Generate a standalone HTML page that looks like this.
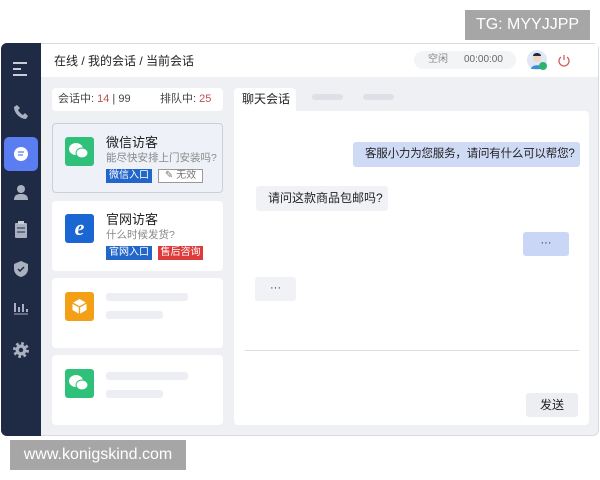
<!DOCTYPE html>
<html><head><meta charset="utf-8"><style>
*{box-sizing:border-box;margin:0;padding:0}
body{width:600px;height:480px;background:#fff;position:relative;overflow:hidden;font-family:"Liberation Sans","Noto Sans CJK SC",sans-serif;color:#333}
.abs{position:absolute;white-space:nowrap}
.frame{left:1px;top:43px;width:598px;height:393px;background:#eff0f4;border:1px solid #d8dbe2;border-radius:6px;overflow:hidden}
.side{left:1px;top:43px;width:40px;height:393px;background:#1f2a44;border-radius:6px 0 0 6px}
.hdr{left:41px;top:44px;width:557px;height:33px;background:#fff}
.card{background:#fff;border-radius:4px}
.ico{width:29px;height:29px;border-radius:3px}
.tag{font-size:10px;color:#fff;height:14px;display:flex;align-items:center;justify-content:center;line-height:1}
.bar{background:#eceef3;border-radius:3px;height:8px}
.g{fill:#a9b0c0}
</style></head><body>
<div class="abs" style="left:465px;top:10px;width:125px;height:30px;background:#a6a6a6;color:#fff;font-size:16px;line-height:30px;text-align:center">TG: MYYJJPP</div>

<div class="abs frame"></div>
<div class="abs side"></div>
<svg class="abs" style="left:1px;top:43px" width="40" height="330" viewBox="0 0 40 330">
<g stroke="#c8cdd8" stroke-width="2" fill="none"><path d="M12 20h14M12 26h8M12 32h14"/></g>
<path class="g" d="M13 64c0 6 6 12 12 12l2-3-3-3-2 2c-2-1-4-3-5-5l2-2-3-3z"/>
<rect x="3" y="94" width="34" height="34" rx="5" fill="#5b7df2"/>
<circle cx="20" cy="111" r="7" fill="#fff"/><path d="M17 109h6M17 112h5" stroke="#5b7df2" stroke-width="1.2"/>
<circle cx="20" cy="146" r="4" class="g"/><path class="g" d="M13 157c0-5 3-6 7-6s7 1 7 6z"/>
<rect x="14" y="180" width="12" height="15" rx="1" class="g"/><rect x="17" y="178" width="6" height="3" fill="#c8cdd8"/><path d="M16 185h8M16 189h8" stroke="#1f2a44"/>
<path class="g" d="M20 218l7 3v5c0 4-3 7-7 8-4-1-7-4-7-8v-5z"/><path d="M17 226l2 2 4-4" stroke="#1f2a44" stroke-width="1.5" fill="none"/>
<path d="M14 260v9M18 264v5M22 261v8M26 266v3" stroke="#a9b0c0" stroke-width="2"/><path d="M13 271h14" stroke="#a9b0c0"/>
<circle cx="20" cy="307" r="6.5" fill="none" stroke="#a9b0c0" stroke-width="3" stroke-dasharray="2.6 2.5"/><circle cx="20" cy="307" r="5.5" class="g"/><circle cx="20" cy="307" r="2.2" fill="#1f2a44"/>
</svg>

<div class="abs hdr"></div>
<div class="abs" style="left:54px;top:52px;font-size:12px;color:#222">在线 / 我的会话 / 当前会话</div>
<div class="abs" style="left:414px;top:51px;width:102px;height:18px;background:#f3f4f6;border-radius:9px;font-size:10px;line-height:18px;color:#888"><span style="margin-left:14px">空闲</span><span style="margin-left:16px;color:#666">00:00:00</span></div>
<svg class="abs" style="left:526px;top:49px" width="24" height="24"><circle cx="11" cy="11" r="10" fill="#dfe8f4"/><circle cx="11" cy="9" r="4" fill="#f2d6c0"/><path d="M7 7c0-4 8-4 8 0z" fill="#1f2a44"/><path d="M5 20c0-5 12-5 12 0z" fill="#3a8fd8"/><circle cx="17" cy="17" r="4" fill="#2db36b"/></svg>
<svg class="abs" style="left:557px;top:53px" width="14" height="14"><path d="M4 4a5 5 0 1 0 6 0M7 2v5" stroke="#d06060" stroke-width="1.3" fill="none"/></svg>

<div class="abs card" style="left:52px;top:88px;width:171px;height:23px;font-size:11px;line-height:23px;color:#444"><span style="margin-left:6px">会话中: <span style="color:#c05050">14</span> | 99</span><span style="position:absolute;left:108px">排队中: <span style="color:#c05050">25</span></span></div>

<div class="abs" style="left:52px;top:123px;width:171px;height:70px;background:#eef1f8;border:1px solid #c9cfdc;border-radius:4px"></div>
<div class="abs ico" style="left:65px;top:137px;background:#2fc17a"></div>
<svg class="abs" style="left:67px;top:140px" width="25" height="22"><ellipse cx="9" cy="9" rx="7" ry="6" fill="#fff"/><ellipse cx="15" cy="13" rx="6" ry="5" fill="#fff" stroke="#2fc17a"/></svg>
<div class="abs" style="left:106px;top:134px;font-size:13px;line-height:18px;color:#222">微信访客</div>
<div class="abs" style="left:106px;top:151px;font-size:10.5px;line-height:14px;color:#888">能尽快安排上门安装吗?</div>
<div class="abs tag" style="left:106px;top:169px;width:46px;background:#2166c8">微信入口</div>
<div class="abs tag" style="left:158px;top:169px;color:#777;border:1px solid #999;background:#fff;width:45px">✎ 无效</div>

<div class="abs card" style="left:52px;top:201px;width:171px;height:70px"></div>
<div class="abs ico" style="left:65px;top:214px;background:#1a66d2;color:#fff;font:italic bold 22px 'Liberation Serif',serif;text-align:center;line-height:28px">e</div>
<div class="abs" style="left:106px;top:211px;font-size:13px;line-height:18px;color:#222">官网访客</div>
<div class="abs" style="left:106px;top:228px;font-size:10.5px;line-height:14px;color:#888">什么时候发货?</div>
<div class="abs tag" style="left:106px;top:246px;width:46px;background:#2166c8">官网入口</div>
<div class="abs tag" style="left:158px;top:246px;width:45px;background:#dd3b3b">售后咨询</div>

<div class="abs card" style="left:52px;top:278px;width:171px;height:70px"></div>
<div class="abs ico" style="left:65px;top:292px;background:#f4a016"></div>
<svg class="abs" style="left:71px;top:298px" width="17" height="17"><path d="M8.5 1l7 4v7l-7 4-7-4V5z" fill="#fff"/><path d="M1.5 5l7 4 7-4M8.5 9v7" stroke="#f4a016" stroke-width="1.3" fill="none"/></svg>
<div class="abs bar" style="left:106px;top:293px;width:82px"></div>
<div class="abs bar" style="left:106px;top:311px;width:57px"></div>

<div class="abs card" style="left:52px;top:355px;width:171px;height:70px"></div>
<div class="abs ico" style="left:65px;top:369px;background:#2fc17a"></div>
<svg class="abs" style="left:67px;top:372px" width="25" height="22"><ellipse cx="9" cy="9" rx="7" ry="6" fill="#fff"/><ellipse cx="15" cy="13" rx="6" ry="5" fill="#fff" stroke="#2fc17a"/></svg>
<div class="abs bar" style="left:106px;top:372px;width:82px"></div>
<div class="abs bar" style="left:106px;top:390px;width:57px"></div>

<div class="abs" style="left:234px;top:88px;width:62px;height:24px;background:#fff;border-radius:4px 4px 0 0;font-size:12px;line-height:22px;padding-left:8px;color:#222">聊天会话</div>
<div class="abs" style="left:312px;top:94px;width:31px;height:6px;background:#dde0e7;border-radius:3px"></div>
<div class="abs" style="left:363px;top:94px;width:31px;height:6px;background:#dde0e7;border-radius:3px"></div>
<div class="abs" style="left:234px;top:111px;width:355px;height:314px;background:#fff;border-radius:0 4px 4px 4px"></div>
<div class="abs" style="left:353px;top:142px;width:227px;height:25px;background:#cfdaf5;border-radius:3px;font-size:11.5px;line-height:25px;padding-left:12px;color:#222;letter-spacing:-0.2px">客服小力为您服务，请问有什么可以帮您?</div>
<div class="abs" style="left:256px;top:186px;width:132px;height:25px;background:#f1f2f5;border-radius:3px;font-size:12px;line-height:25px;padding-left:12px;color:#222">请问这款商品包邮吗?</div>
<div class="abs" style="left:523px;top:232px;width:46px;height:24px;background:#c9d6f6;border-radius:3px;font-size:11px;line-height:22px;text-align:center">···</div>
<div class="abs" style="left:255px;top:277px;width:41px;height:24px;background:#f1f2f5;border-radius:3px;font-size:11px;line-height:22px;text-align:center">···</div>
<div class="abs" style="left:245px;top:350px;width:334px;height:1px;background:#dcdde0"></div>
<div class="abs" style="left:526px;top:393px;width:52px;height:24px;background:#eceef2;border-radius:3px;font-size:12px;line-height:24px;text-align:center;color:#222">发送</div>

<div class="abs" style="left:10px;top:440px;width:176px;height:30px;background:#a6a6a6;color:#fff;font-size:16px;line-height:30px;text-align:center">www.konigskind.com</div>
</body></html>
